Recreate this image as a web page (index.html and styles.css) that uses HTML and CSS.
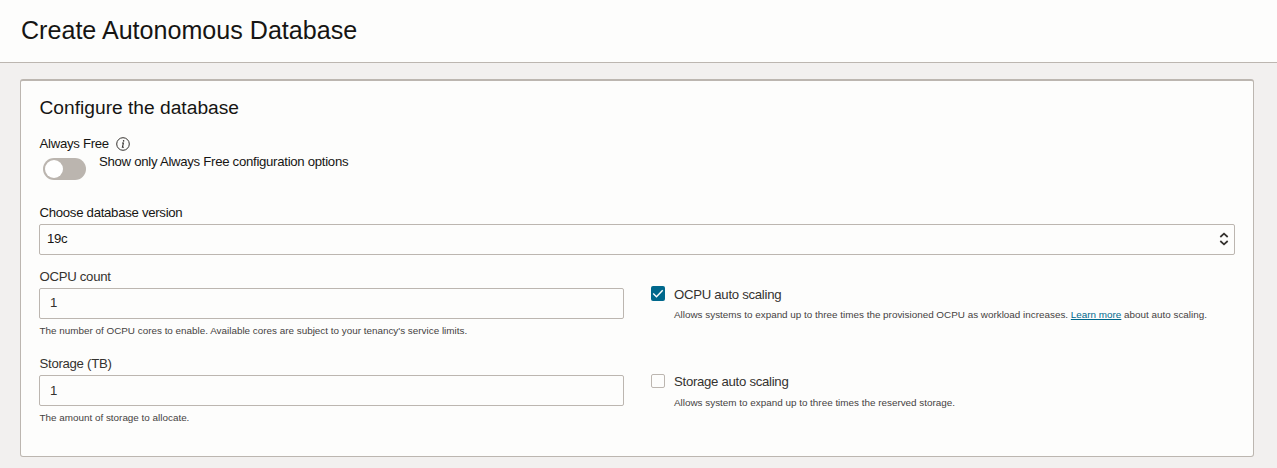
FILE: index.html
```html
<!DOCTYPE html>
<html lang="en">
<head>
<meta charset="utf-8">
<title>Create Autonomous Database</title>
<link rel="stylesheet" href="styles.css">
</head>
<body>
<header class="page-header"><h1>Create Autonomous Database</h1></header>
<main class="panel">
  <h2>Configure the database</h2>
  <div class="always-free">
    <span class="free-label">Always Free</span>
    <svg class="info" width="14" height="14" viewBox="0 0 14 14"><circle cx="7" cy="7" r="6.3" fill="none" stroke="#35322f" stroke-width="1"/><path d="M6 6h1.4L6.4 10.3h1.5" fill="none" stroke="#35322f" stroke-width="1.1"/><circle cx="7.6" cy="3.9" r=".8" fill="#35322f"/></svg>
  </div>
  <div class="toggle-row">
    <span class="toggle" role="switch" aria-checked="false"><span class="knob"></span></span>
    <span class="toggle-text">Show only Always Free configuration options</span>
  </div>
  <div class="label version-label">Choose database version</div>
  <div class="field select"><span class="version">19c</span>
    <svg width="10" height="14" viewBox="0 0 10 14" fill="none" stroke="#35322f" stroke-width="1.7"><path d="M1.3 5 5 1.6 8.7 5M1.3 9 5 12.4 8.7 9"/></svg>
  </div>
  <div class="row ocpu">
    <div class="column">
      <div class="label">OCPU count</div>
      <div class="field">1</div>
      <div class="hint">The number of OCPU cores to enable. Available cores are subject to your tenancy's service limits.</div>
    </div>
    <div class="option">
      <span class="checkbox checked"><svg width="14" height="15" viewBox="0 0 14 15" fill="none" stroke="#fff" stroke-width="1.4"><path d="M2.2 7.6 5.5 10.8 11.7 4.2"/></svg></span>
      <div><div class="option-title">OCPU auto scaling</div><div class="option-hint">Allows systems to expand up to three times the provisioned OCPU as workload increases. <a href="#">Learn more</a> about auto scaling.</div></div>
    </div>
  </div>
  <div class="row storage">
    <div class="column">
      <div class="label">Storage (TB)</div>
      <div class="field">1</div>
      <div class="hint">The amount of storage to allocate.</div>
    </div>
    <div class="option">
      <span class="checkbox"></span>
      <div><div class="option-title">Storage auto scaling</div><div class="option-hint">Allows system to expand up to three times the reserved storage.</div></div>
    </div>
  </div>
</main>
</body>
</html>
```
FILE: styles.css
```css
* { box-sizing: border-box; }
body { margin: 0; height: 468px; overflow: hidden; background: #f2f0ef; color: #161513; font: 13.2px/16px "Liberation Sans", Arial, sans-serif; letter-spacing: -.29px; }
.page-header { height: 63px; padding: 15px 21px 0; background: #fdfdfc; border-bottom: 1px solid #bcb6b0; }
h1, h2 { margin: 0; font-weight: 400; letter-spacing: 0; }
h1 { font-size: 25.1px; line-height: 30px; }
.panel { width: 1234px; height: 378px; margin: 16px 0 0 20px; padding: 15px 18px 0; background: #fdfdfc; border: 1px solid #bcb6b0; border-top-width: 2px; border-radius: 3px; }
h2 { padding-left: .5px; font-size: 19.2px; line-height: 24px; }
.always-free { display: flex; gap: 7px; align-items: center; height: 16px; margin-top: 16px; padding-left: .5px; }
.toggle-row { display: flex; gap: 13px; height: 53px; padding: 6px 0 0 4px; }
.toggle { width: 43px; height: 22px; padding: 2px; border-radius: 11px; background: #bbb5af; }
.knob { display: block; width: 18px; height: 18px; border-radius: 50%; background: #fff; }
.toggle-text { margin-top: -4px; }
.field { display: flex; align-items: center; height: 31px; padding: 0 10px 2px; background: #fdfdfc; border: 1px solid #bcb6b0; border-radius: 2px; }
.label { height: 20px; padding: 1px 0 0 .5px; }
.version-label { height: 19px; padding-top: 0; }
.select { justify-content: space-between; padding: 0 5px 1px 7px; }
.row { display: flex; gap: 27px; height: 87px; }
.ocpu { margin-top: 13px; }
.storage .field { padding-bottom: 0; }
.column { width: 585px; color: #34322f; }
.hint, .option-hint { font-size: 9.88px; line-height: 12px; letter-spacing: 0; color: #45423f; white-space: nowrap; }
.hint { margin-top: 6px; padding-left: .5px; }
.option { display: flex; gap: 9px; margin-top: 18px; color: #34322f; }
.checkbox { width: 14px; height: 14px; margin-top: 1px; border: 1px solid #bcb6b0; border-radius: 2px; }
.checked { height: 15px; margin-top: 0; border: 0; background: #00688c; }
.checked svg { display: block; }
.option-title { padding-top: 1px; height: 23px; }
.storage .option-title { height: 24px; }
a { color: #00688c; text-underline-offset: 1px; }
```
